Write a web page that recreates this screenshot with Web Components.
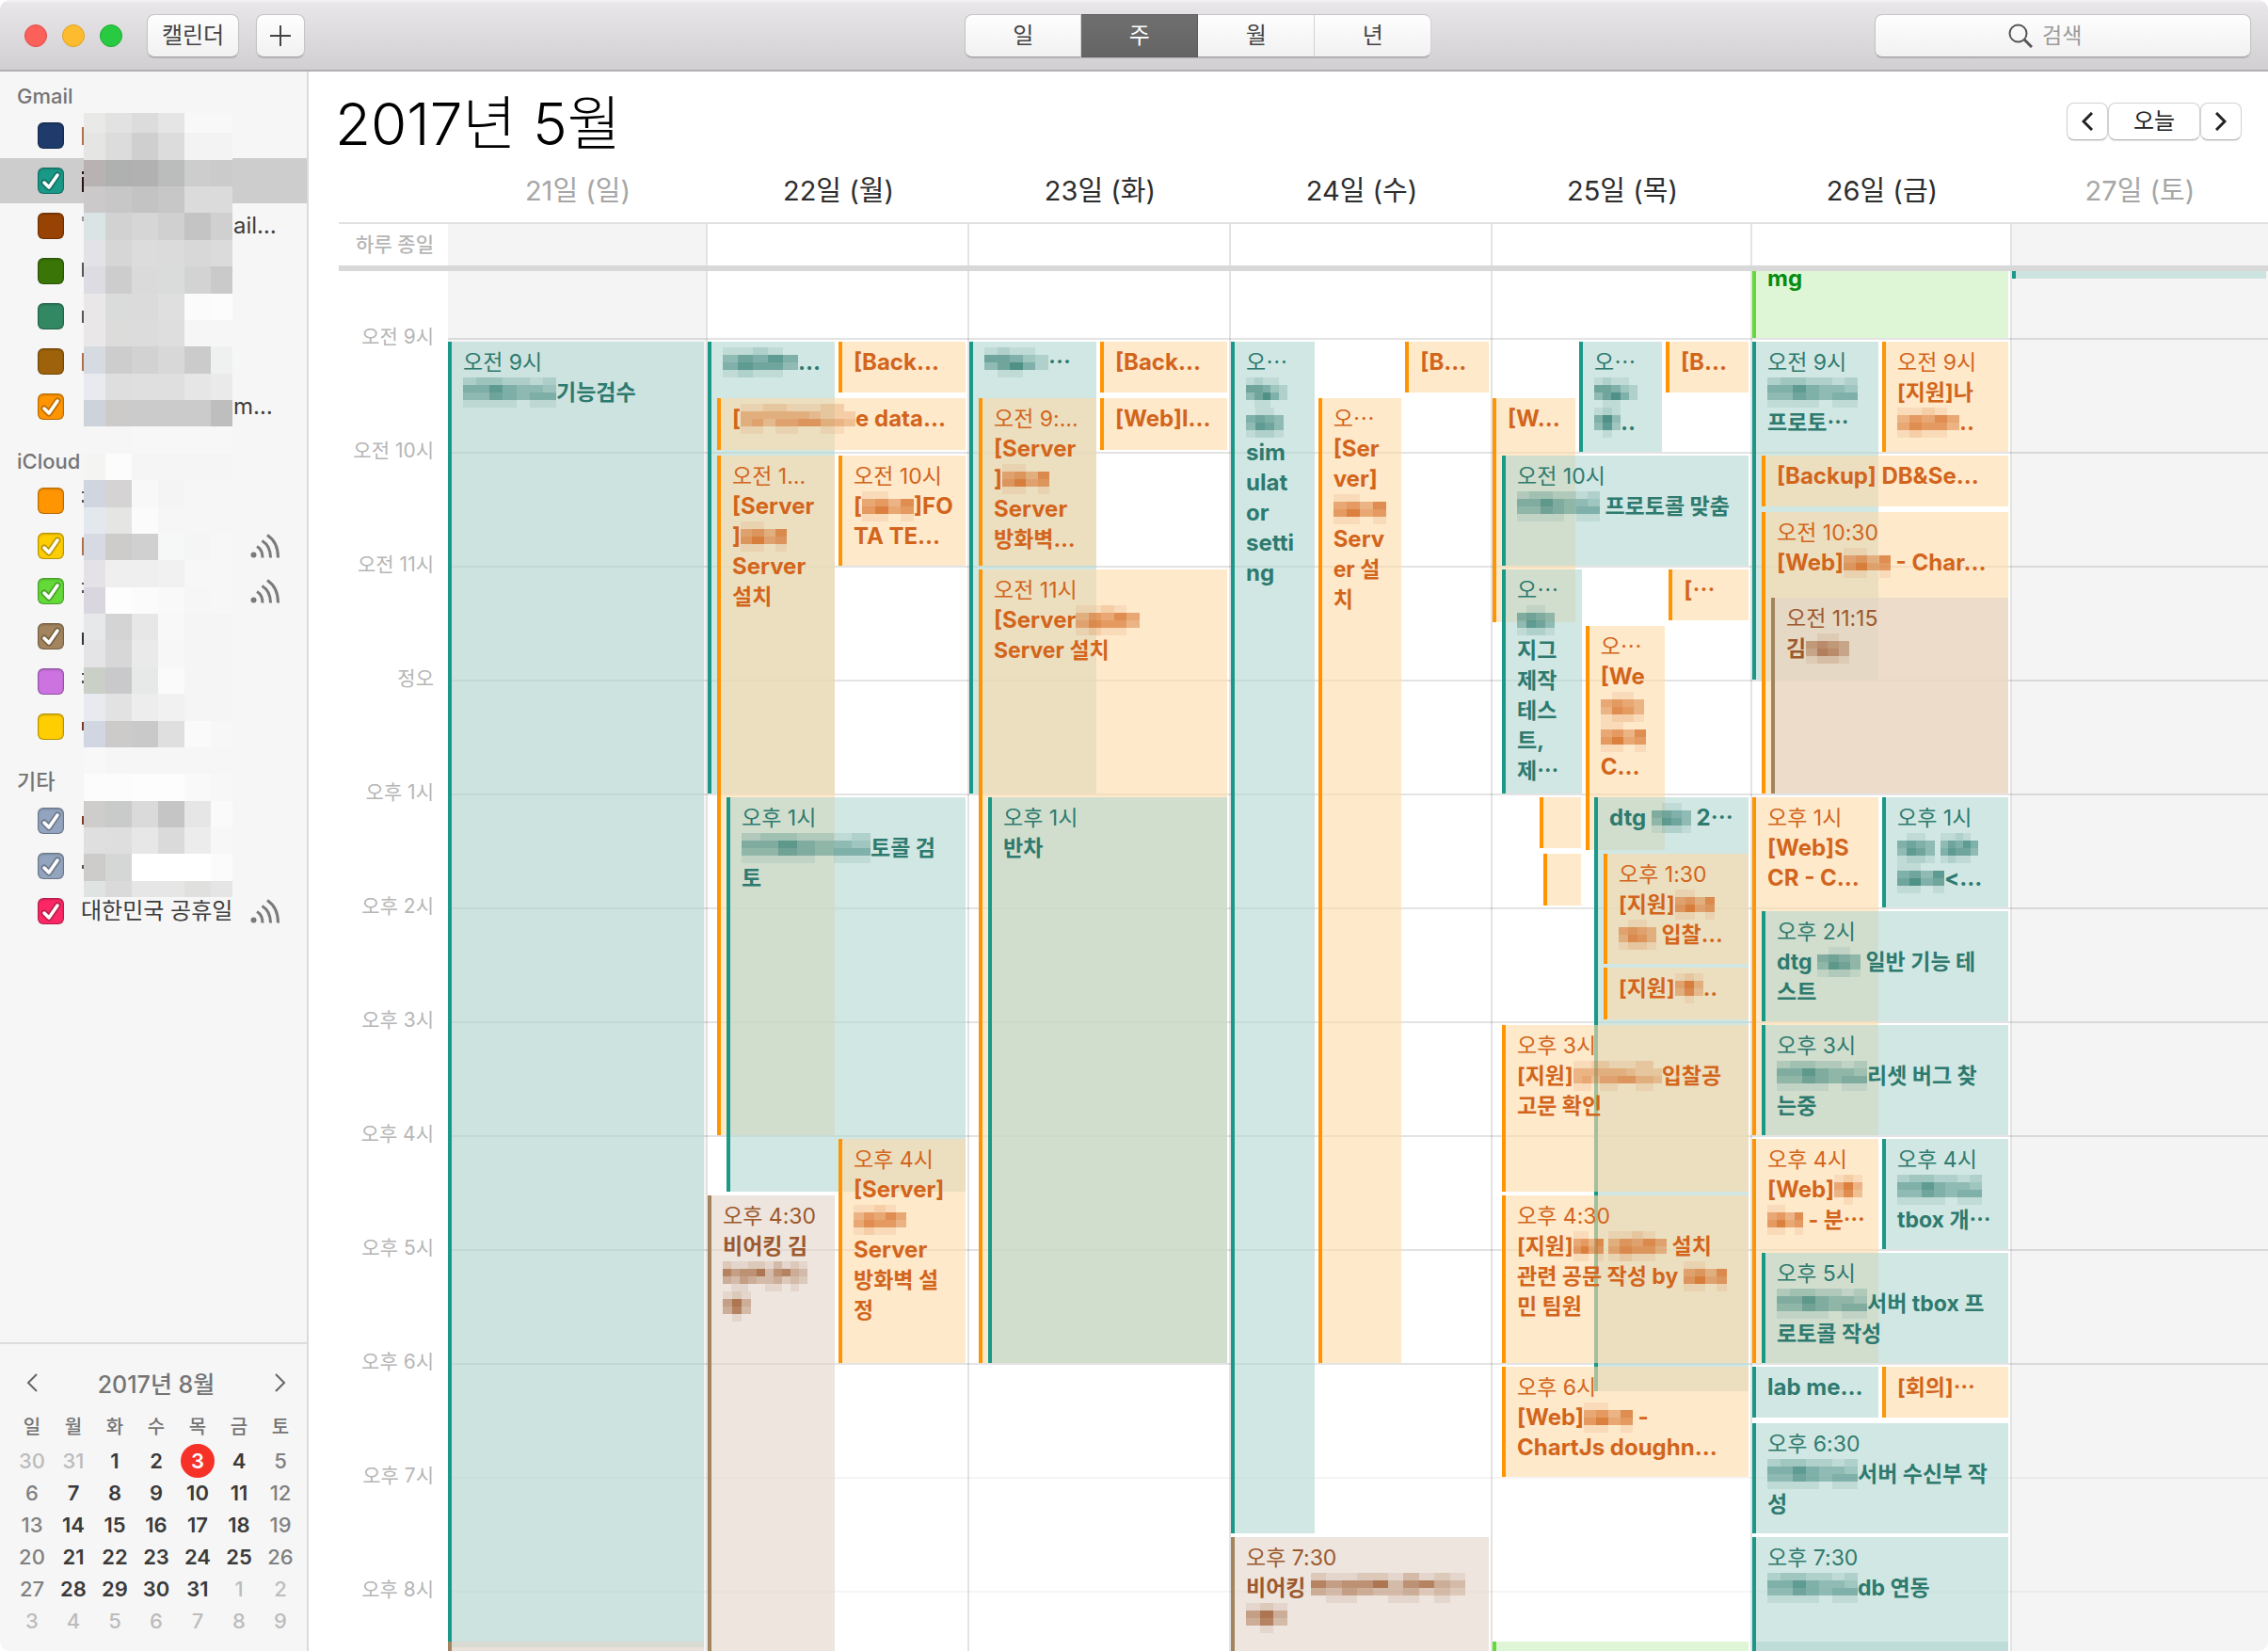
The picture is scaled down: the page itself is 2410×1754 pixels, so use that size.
<!DOCTYPE html>
<html lang="ko">
<head>
<meta charset="utf-8">
<title>캘린더</title>
<style>
html,body{margin:0;height:100%;background:#fff}
body{font-family:Inter,"Noto Sans CJK KR",sans-serif;color:#333}
</style>
</head>
<body>
<cal-app>
  <mac-toolbar slot="toolbar"></mac-toolbar>
  <cal-sidebar slot="side">
    <cal-group name="Gmail">
      <cal-item color="#1f3b6b"></cal-item>
      <cal-item color="#1a9988" checked selected></cal-item>
      <cal-item color="#984303">ail…</cal-item>
      <cal-item color="#3a7508"></cal-item>
      <cal-item color="#318862"></cal-item>
      <cal-item color="#9e630a"></cal-item>
      <cal-item color="#ff9502" checked>m…</cal-item>
    </cal-group>
    <cal-group name="iCloud">
      <cal-item color="#ff9502"></cal-item>
      <cal-item color="#fecd02" checked feed></cal-item>
      <cal-item color="#63da38" checked feed></cal-item>
      <cal-item color="#a2845e" checked></cal-item>
      <cal-item color="#cc73e1"></cal-item>
      <cal-item color="#fecd02"></cal-item>
    </cal-group>
    <cal-group name="기타">
      <cal-item color="#93a4be" checked></cal-item>
      <cal-item color="#93a4be" checked></cal-item>
      <cal-item color="#fc2866" checked feed wide>대한민국 공휴일</cal-item>
    </cal-group>
    <mini-calendar slot="foot"></mini-calendar>
  </cal-sidebar>
  <week-view></week-view>
</cal-app>
<script>
const def = (name, html, setup) => customElements.define(name, class extends HTMLElement {
  connectedCallback() {
    if (this.shadowRoot) return;
    const root = this.attachShadow({mode: 'open'});
    root.innerHTML = typeof html === 'function' ? html(this) : html;
    if (setup) setup(this, root);
  }
});
const chevron = (dir, s) => `<svg width="12" height="20" viewBox="0 0 12 20" fill="none" stroke="currentColor" stroke-width="${s}"><path d="${dir === 'left' ? 'M11 1 2 10l9 9' : 'M1 1l9 9-9 9'}"/></svg>`;

/* Window frame: toolbar on top, sidebar and week below */
def('cal-app', `
<style>
:host{display:flex;flex-direction:column;height:100vh;border-radius:10px;overflow:hidden;background:#fff}
.body{flex:1;min-height:0;display:flex}
</style>
<slot name="toolbar"></slot><div class="body"><slot name="side"></slot><slot></slot></div>`);

def('mac-toolbar', `
<style>
:host{display:flex;align-items:center;height:72px;border-bottom:2px solid #b1afb1;background:linear-gradient(#f4f3f4 0,#e8e6e8 4px,#d1cfd2);padding:2px 18px 0 26px}
.light{width:22px;height:22px;border-radius:50%;border:1px solid;margin-right:16px}
button,.search{box-sizing:border-box;height:46px;margin:0;border:1px solid #c6c4c6;border-bottom-color:#a2a0a2;border-radius:8px;background:linear-gradient(#fefefe,#f1f1f1);color:#444;font:24px/40px Inter,"Noto Sans CJK KR",sans-serif;padding:0;display:flex;align-items:center;justify-content:center;box-shadow:0 1px 1px rgba(0,0,0,.12)}
.name{width:98px;margin-left:10px}.add{width:52px;margin-left:18px}
.seg{display:flex}
.seg button{width:124px;border-radius:0;border-left-width:0;border-right-color:#d5d5d5}
.seg button:first-child{border-radius:8px 0 0 8px;border-left-width:1px}
.seg button:last-child{border-radius:0 8px 8px 0}
.seg button[aria-pressed=true]{background:linear-gradient(#6f6f6f,#646464);color:#fff;border-color:#5e5e5e}
.a{flex:70}.b{flex:47}
.search{width:400px;gap:10px;color:#555}
input{width:80px;box-sizing:border-box;border:0;padding:0;background:none;font:23px/40px Inter,"Noto Sans CJK KR",sans-serif;outline:0;appearance:none}
input::placeholder{color:#9b9b9b;opacity:1}
input::-webkit-search-cancel-button{display:none}
</style>
<span class="light" style="background:#fc605b;border-color:#de4843"></span>
<span class="light" style="background:#fdbc2f;border-color:#dfa023"></span>
<span class="light" style="background:#28ca42;border-color:#1bab2c"></span>
<button class="name">캘린더</button>
<button class="add" aria-label="+"><svg width="24" height="24" stroke="currentColor" stroke-width="2"><path d="M1 12h22M12 1v22"/></svg></button>
<span class="a"></span>
<div class="seg"><button>일</button><button aria-pressed="true">주</button><button>월</button><button>년</button></div>
<span class="b"></span>
<label class="search"><svg width="26" height="26" fill="none" stroke="currentColor" stroke-width="2"><circle cx="10.500" cy="10.500" r="9"/><path d="M17 17l8 8" stroke-width="3"/></svg><input type="search" placeholder="검색" aria-label="검색"></label>`);

/* Blurred-out calendar names: one grid of cells down the list */
const nameCells = `
e9e9e7 e2 dc e5 f8 f8|e5e5e3 dc cf dc f3 f3|b9b2b2 afb1b0 b1 babdbb cd cb|cbc9ca c7 c3 c7 db db|dbe4e5 d2 d6 d0 c4 d0|
e3e2e6 d6 dc db d8 db|dddce2 cd da d9dcdb d3 ca|eae7e9 dadcdb db df fb fc|eae7e8 dcdcda dc de f6 f6|d6dbe1 cd d2 d8 cb eff1f0|
e8eaef de df df e6 ea|cdd2db cdcbc9 cb cb cb be|f6 f6 f7 f7 f7 f7|f4f5f2 fc f5 f5 f5 f5|d1d5df d5d3d4 f8 f4 f6 f6|
e3e8ee e5e5e4 fb f6 f6 f6|d7dae3 cdcccb d0 f6f8f7 f5 f7|e5e2e7 ef ef f1 f7 f7|dad6df fd fb f9 f6 f7|e7e8ea d4 e7 f8 f5 f5|
e4e4e6 d7 ea f7 f5 f5|cacfc7 c9c9cb e6e9e7 fa f5 f5|e9eaf0 e2 ed f1 f5 f5|d2d5e2 cdcbca c9 df fa f7|f8 f6 f6 f6 f6 f6|
fc fc fd fd f9 f7|cecdcb c9cbca da c5 e6 fa|df de e7 da ec f7|cdccca d5d7d6 ff ff ff fb|dfe4e3 da e6 e6 e0e1df e5`.replace(/\n/g, '').split('|').map(r => r.trim().split(' '));
const colX = [2, 25, 53, 81, 109, 137, 160];
const rowY = i => i ? Math.round(i * 28.37 - 7) : 0;
const nameSvg = () => {
  let s = '';
  nameCells.forEach((r, i) => r.forEach((c, j) => {
    const y = rowY(i), h = (i === 29 ? 833 : rowY(i + 1)) - y;
    s += `<rect x="${colX[j]}" y="${y}" width="${colX[j + 1] - colX[j]}" height="${h}" fill="#${c.length === 2 ? c + c + c : c}"/>`;
  }));
  [[15,19,'#b0704f'],[62,3,'#2a1010'],[68,16,'#2a1010'],[110,5,'#999'],[159,15,'#555'],[210,13,'#555'],[255,19,'#b0704f'],[402,2,'#555'],[411,3,'#555'],[451,19,'#b0704f'],[499,2,'#555'],[507,3,'#555'],[552,13,'#333'],[595,2,'#555'],[603,3,'#555'],[647,9,'#7a3b28'],[747,9,'#7a3b28'],[799,4,'#555']].forEach(([y, h, c]) => s += `<rect x="0" y="${y}" width="2" height="${h}" fill="${c}"/>`);
  return `<svg width="160" height="833" shape-rendering="crispEdges">${s}</svg>`;
};

def('cal-sidebar', () => `
<style>
:host{box-sizing:border-box;width:328px;flex:none;display:flex;flex-direction:column;background:#f6f6f6;border-right:2px solid #dadada}
.list{position:relative;flex:1;min-height:0;overflow:hidden}
.mask{position:absolute;left:87px;top:44px;line-height:0;pointer-events:none}
::slotted(cal-group:first-of-type){margin-top:-8px}
</style>
<div class="list"><slot></slot><div class="mask">${nameSvg()}</div></div>
<slot name="foot"></slot>`);

def('cal-group', el => `
<style>
:host{display:block}
h2{margin:0;padding:16px 18px 0;font-size:22px;line-height:36px;font-weight:500;color:#747474}
</style>
<h2>${el.getAttribute('name')}</h2><slot></slot>`);

def('cal-item', el => `
<style>
:host{display:block}
label{display:flex;align-items:center;height:48px;padding:0 28px 0 40px;font-size:24px;line-height:36px;color:#3d3d3d}
:host([selected]) label{background:#cdcdcd}
.box{display:grid;width:28px;height:28px;margin-right:18px}
.box>*{grid-area:1/1}
input{appearance:none;margin:0;width:28px;height:28px;border-radius:6px;background:${el.getAttribute('color')};border:1px solid rgba(0,0,0,.28);box-shadow:inset 0 1px 2px rgba(0,0,0,.2)}
.text{flex:1;white-space:nowrap;padding-left:162px}
:host([wide]) .text{padding-left:0}
svg{display:block}
</style>
<label><span class="box"><input type="checkbox" aria-label="캘린더" ${el.hasAttribute('checked') ? 'checked' : ''}>
${el.hasAttribute('checked') ? '<svg width="28" height="28" fill="none" stroke-linecap="round" stroke-linejoin="round"><path d="M7 16l5 5 9-13" stroke="#000" stroke-opacity=".25" stroke-width="7"/><path d="M7 16l5 5 9-13" stroke="#fff" stroke-width="3.500"/></svg>' : ''}</span>
<span class="text"><slot></slot></span>
${el.hasAttribute('feed') ? '<svg width="32" height="26" fill="none" stroke="#7a7a7a" stroke-width="3"><circle cx="3.500" cy="22.500" r="3" fill="#7a7a7a" stroke="none"/><path d="M7 13.500Q13 17 13 25.500M12.500 7.500Q21.500 13 21.500 25.500M18 1.500Q29.500 9 29.500 25.500"/></svg>' : ''}</label>`);

def('mini-calendar', () => {
  const days = [30, 31, ...Array.from({length: 31}, (_, i) => i + 1), 1, 2, 3, 4, 5, 6, 7, 8, 9];
  let rows = '';
  for (let r = 0; r < 6; r++) {
    rows += '<tr>';
    for (let c = 0; c < 7; c++) {
      const i = r * 7 + c, out = i < 2 || i > 32;
      rows += `<td class="${out ? 'out' : c % 6 ? '' : 'end'}">${i === 4 ? '<b>3</b>' : days[i]}</td>`;
    }
    rows += '</tr>';
  }
  return `
<style>
:host{display:block;border-top:2px solid #dcdcdc;padding:22px 6px 15px 12px}
header{display:flex;align-items:center;justify-content:space-between;padding:0 16px;height:38px;color:#747474;font-size:25px;font-weight:500}
button{border:0;background:none;padding:0;color:#666;display:flex}
table{border-collapse:collapse;table-layout:fixed;width:308px;margin-top:9px}
th,td{padding:0;text-align:center;height:34px;line-height:34px;font-size:22px;font-weight:600;color:#3a3a3a}
th{font-size:20px;height:38px;line-height:38px;color:#747474;font-weight:500}
td.end,td.out{font-weight:500}
td.end{color:#808080}td.out{color:#bcbcbc}
b{display:block;width:36px;height:36px;margin:-1px auto;line-height:36px;border-radius:50%;background:#f63127;color:#fff;font-weight:600}
</style>
<header><button aria-label="이전 달">${chevron('left', 2)}</button><span>2017년 8월</span><button aria-label="다음 달">${chevron('right', 2)}</button></header>
<table><thead><tr>${[...'일월화수목금토'].map(d => `<th>${d}</th>`).join('')}</tr></thead><tbody>${rows}</tbody></table>`;
});

/* Pixelated part of a title; each digit is the strength of one cell */
def('px-mask', el => {
  const rows = el.getAttribute('rows').split('/'), w = rows[0].length, h = rows.length;
  let s = '';
  rows.forEach((r, y) => [...r].forEach((d, x) => { if (+d) s += `<rect x="${x}" y="${y}" width="1" height="1" fill-opacity="${d / 10}"/>`; }));
  return `<style>:host{display:inline-block;vertical-align:top;width:${el.getAttribute('w')}px;height:32px}svg{display:block;width:100%;height:100%}</style>
<svg viewBox="0 0 ${w} ${h}" preserveAspectRatio="none" fill="currentColor" shape-rendering="crispEdges">${s}</svg>`;
});

/* One event: placed on five-minute grid rows, in a lane of its day */
const tones = {
  t: ['#1a9988', 'rgba(178,215,208,.6)', '#2e7a6f'],
  o: ['#ff9502', 'rgba(254,218,168,.6)', '#d2651b'],
  b: ['#a2845e', 'rgba(225,212,200,.6)', '#9c592d'],
  g: ['#63da38', 'rgba(202,240,187,.6)', '#068c10']
};
def('cal-event', el => {
  const a = n => +el.getAttribute(n) || 0;
  const [bar, bg, fg] = tones[el.getAttribute('tone')];
  const n = a('lanes') || 1, i = a('lane'), base = a('base'), inner = a('inner');
  const lane = `(100% + 2px - ${base}px) / ${n}`;
  return `
<style>
:host{box-sizing:border-box;grid-column:1;justify-self:start;margin:4px 0 ${a('to') - a('from') <= 30 ? 2 : 0}px calc(${base + inner}px + ${lane} * ${i});
width:${a('w') ? a('w') + 'px' : `calc(${lane} - ${4 + inner}px)`};
grid-row:${(a('from') - 480) / 5 + 1} / ${(a('to') - 480) / 5 + 1};
border-left:4px solid ${bar};background:${bg};background-clip:padding-box;color:${fg};padding:6px 0 0 12px;font-size:23px;line-height:32px;white-space:nowrap;min-width:0;min-height:0}
</style><slot></slot>`;
});

const P = {
  a: '1211010/6642032/5583155/0110010', b: '12110/66532/46852/01100', c: '0110/5654/4764/1221',
  d: '1100/5647/6856/1101', e: '11210/46575/57664/12110', f: '1122111220/4444443222/4535566443/1101100110',
  g: '2112213121/7566836743/4354334232/0110011010', h: '121/584/473/010', k: '2332212/5575443/4465455/1111011'
};
const m = (w, p) => `<px-mask w="${w}" rows="${P[p]}"></px-mask>`;
const H = (h, mm = 0) => h * 60 + mm;
/* tone, from, to, lane options, time line (empty for title only), title lines */
const week = [
  [['t', H(9), H(20,30), {}, '오전 9시', [m(99,'k') + '기능검수']],
   ['b', H(20,25), H(21), {}, '오후 8:30', []]],
  [['t', H(9), H(13), {n:2}, '', [m(80,'e') + '…']],
   ['o', H(9), H(9,30), {n:2,i:1}, '', ['[Back…']],
   ['o', H(9,30), H(10), {j:10}, '', ['[' + m(122,'f') + 'e data…']],
   ['o', H(10), H(16), {n:2,j:10}, '오전 1…', ['[Server', ']' + m(49,'d'), 'Server', '설치']],
   ['o', H(10), H(11), {n:2,i:1}, '오전 10시', ['[' + m(55,'d') + ']FO', 'TA TE…']],
   ['t', H(13), H(16,30), {j:20}, '오후 1시', [m(137,'k') + '토콜 검', '토']],
   ['o', H(16), H(18), {n:2,i:1}, '오후 4시', ['[Server]', m(56,'e'), 'Server', '방화벽 설', '정']],
   ['b', H(16,30), H(21), {n:2}, '오후 4:30', ['비어킹 김', m(90,'g'), m(30,'h')]]],
  [['t', H(9), H(13), {n:2}, '', [m(68,'b') + '⋯']],
   ['o', H(9), H(9,30), {n:2,i:1}, '', ['[Back…']],
   ['o', H(9,30), H(10), {n:2,i:1}, '', ['[Web]l…']],
   ['o', H(9,30), H(11), {n:2,j:10}, '오전 9:…', ['[Server', ']' + m(50,'d'), 'Server', '방화벽…']],
   ['o', H(11), H(18), {j:10}, '오전 11시', ['[Server' + m(68,'e'), 'Server 설치']],
   ['t', H(13), H(18), {j:20}, '오후 1시', ['반차']]],
  [['t', H(9), H(19,30), {n:3}, '오⋯', [m(44,'b'), m(40,'c'), 'sim', 'ulat', 'or', 'setti', 'ng']],
   ['o', H(9), H(9,30), {n:3,i:2}, '', ['[B…']],
   ['o', H(9,30), H(18), {n:3,i:1}, '오⋯', ['[Ser', 'ver]', m(56,'d'), 'Serv', 'er 설', '치']],
   ['b', H(19,30), H(21), {}, '오후 7:30', ['비어킹 ' + m(164,'g'), m(44,'h')]]],
  [['t', H(9), H(10), {n:3,i:1}, '오⋯', [m(46,'b'), m(28,'h') + '‥']],
   ['o', H(9), H(9,30), {n:3,i:2}, '', ['[B…']],
   ['o', H(9,30), H(11,30), {n:3}, '', ['[W…']],
   ['t', H(10), H(11), {b:10}, '오전 10시', [m(88,'k') + ' 프로토콜 맞춤']],
   ['t', H(11), H(13), {b:10,n:3}, '오⋯', [m(40,'c'), '지그', '제작', '테스', '트,', '제⋯']],
   ['o', H(11), H(11,30), {b:10,n:3,i:2}, '', ['[⋯']],
   ['o', H(11,30), H(13,30), {b:10,n:3,i:1}, '오⋯', ['[We', m(46,'c'), m(48,'d'), 'C…']],
   ['o', H(13), H(13,30), {b:50,w:44}, '', []],
   ['o', H(13,30), H(14), {b:54,w:40}, '', []],
   ['t', H(13), H(18,15), {b:108}, '', ['dtg ' + m(42,'c') + ' 2⋯']],
   ['o', H(13,30), H(14,30), {b:118}, '오후 1:30', ['[지원]' + m(42,'d'), m(40,'c') + ' 입찰…']],
   ['o', H(14,30), H(15), {b:118}, '', ['[지원]' + m(30,'h') + '‥']],
   ['o', H(15), H(16,30), {b:10}, '오후 3시', ['[지원]' + m(94,'f') + '입찰공', '고문 확인']],
   ['o', H(16,30), H(18), {b:10}, '오후 4:30', ['[지원]' + m(32,'d') + ' ' + m(62,'e') + ' 설치', '관련 공문 작성 by ' + m(46,'d'), '민 팀원']],
   ['o', H(18), H(19), {b:10}, '오후 6시', ['[Web]' + m(52,'d') + ' -', 'ChartJs doughn…']],
   ['g', H(20,25), H(21), {}, '오후 8:30', []]],
  [['g', H(8), H(9), {}, '&nbsp;', ['mg']],
   ['t', H(9), H(12), {n:2}, '오전 9시', [m(96,'k'), '프로토⋯']],
   ['o', H(9), H(10), {n:2,i:1}, '오전 9시', ['[지원]나', m(66,'e') + '‥']],
   ['o', H(10), H(10,30), {j:10}, '', ['[Backup] DB&amp;Se…']],
   ['o', H(10,30), H(13), {j:10}, '오전 10:30', ['[Web]' + m(50,'d') + ' - Char…']],
   ['b', H(11,15), H(13), {j:20}, '오전 11:15', ['김' + m(46,'c')]],
   ['o', H(13), H(16), {n:2}, '오후 1시', ['[Web]S', 'CR - C…']],
   ['t', H(13), H(14), {n:2,i:1}, '오후 1시', [m(40,'c') + ' ' + m(40,'e'), m(50,'d') + '&lt;…']],
   ['t', H(14), H(15), {j:10}, '오후 2시', ['dtg ' + m(46,'c') + ' 일반 기능 테', '스트']],
   ['t', H(15), H(16), {j:10}, '오후 3시', [m(96,'k') + '리셋 버그 찾', '는중']],
   ['o', H(16), H(18), {n:2}, '오후 4시', ['[Web]' + m(30,'h'), m(38,'d') + ' - 분⋯']],
   ['t', H(16), H(17), {n:2,i:1}, '오후 4시', [m(90,'k'), 'tbox 개⋯']],
   ['t', H(17), H(18), {j:10}, '오후 5시', [m(96,'k') + '서버 tbox 프', '로토콜 작성']],
   ['t', H(18), H(18,30), {n:2}, '', ['lab me…']],
   ['o', H(18), H(18,30), {n:2,i:1}, '', ['[회의]⋯']],
   ['t', H(18,30), H(19,30), {}, '오후 6:30', [m(96,'k') + '서버 수신부 작', '성']],
   ['t', H(19,30), H(21), {}, '오후 7:30', [m(96,'k') + 'db 연동']],
   ['t', H(20,25), H(21), {}, '오후 8:30', []]],
  [['t', H(8), H(8,30), {}, '', []]]
];

def('cal-day', el => {
  const day = +el.getAttribute('index');
  let s = '';
  for (let h = 0; h < 13; h++) s += `<i style="grid-row:${h * 12 + 1}" class="${h > 10 ? 'late' : ''}"></i>`;
  for (const [tone, from, to, o, time, title] of week[day])
    s += `<cal-event tone="${tone}" from="${from}" to="${to}" lanes="${o.n || 1}" lane="${o.i || 0}" base="${o.b || 0}" inner="${o.j || 0}" w="${o.w || 0}">${time ? `<div>${time}</div>` : ''}${title.map(t => `<div class="title${/[가-힣]/.test(t) ? '' : ' latin'}">${t}</div>`).join('')}</cal-event>`;
  return `
<style>
:host{display:grid;grid-template-columns:minmax(0,1fr);grid-template-rows:${Array(13).fill('repeat(11,10px) 11px').join(' ')};border-right:2px solid #e3e3e3;min-width:0}
:host([weekend]){background:#f4f4f4}
:host(:last-of-type){border-right:0}
i{grid-column:1;height:2px;margin-right:-2px;background:rgba(0,0,0,.11)}
i.late{background:rgba(0,0,0,.04)}
cal-event div{height:32px}
.title{font-weight:700}
.latin{font-size:24px}
</style>${s}`;
});

def('week-view', () => {
  const heads = ['21일 (일)', '22일 (월)', '23일 (화)', '24일 (수)', '25일 (목)', '26일 (금)', '27일 (토)'];
  const hours = ['', '오전 9시', '오전 10시', '오전 11시', '정오', '오후 1시', '오후 2시', '오후 3시', '오후 4시', '오후 5시', '오후 6시', '오후 7시', '오후 8시'];
  return `
<style>
:host{flex:1;min-width:0;display:flex;flex-direction:column;padding-left:32px;background:#fff}
.top{display:flex;align-items:center;justify-content:space-between;height:78px;padding:14px 28px 0 0}
h1{margin:0 0 0 -4px;padding-top:6px;font-size:62px;line-height:72px;font-weight:300;color:#000}
nav{display:flex}
button{box-sizing:border-box;height:40px;width:44px;padding:0;border:1px solid #d2d2d2;border-bottom-color:#b4b4b4;border-radius:8px;background:#fff;box-shadow:0 1px 1px rgba(0,0,0,.1);color:#222;font:24px/36px Inter,"Noto Sans CJK KR",sans-serif;display:flex;align-items:center;justify-content:center}
button.today{width:98px}
.row{display:grid;grid-template-columns:116px minmax(0,276fr) repeat(3,minmax(0,278fr)) repeat(2,minmax(0,276fr)) minmax(0,272fr)}
.heads{height:68px;line-height:70px;font-size:29px;color:#2d2d2d;text-align:center}
.heads .off{color:#a6a6a6}
.allday{border-top:2px solid #e1e1e1;border-bottom:6px solid #d8d8d8;height:44px}
.allday span{border-right:2px solid #e3e3e3}
.allday span:last-child{border:0}
.allday .off{background:#f4f4f4}
.label{text-align:right;padding-right:15px;font-size:21px;line-height:30px;color:#b6b6b6}
.allday .label{line-height:44px;font-weight:500}
.scroll{flex:1;min-height:0;overflow:hidden}
.scroll .row{margin-top:-50px}
.hour{height:121px}
.hour div{position:relative;top:-16px}
</style>
<div class="top"><h1>2017년 5월</h1><nav><button aria-label="이전 주">${chevron('left', 3)}</button><button class="today">오늘</button><button aria-label="다음 주">${chevron('right', 3)}</button></nav></div>
<div class="row heads"><span></span>${heads.map((h, i) => `<span class="${i % 6 ? '' : 'off'}">${h}</span>`).join('')}</div>
<div class="row allday"><div class="label">하루 종일</div>${heads.map((h, i) => `<span class="${i % 6 ? '' : 'off'}"></span>`).join('')}</div>
<div class="scroll"><div class="row"><div>${hours.map(h => `<div class="hour label"><div>${h}</div></div>`).join('')}</div>
${heads.map((h, i) => `<cal-day index="${i}" ${i % 6 ? '' : 'weekend'}></cal-day>`).join('')}</div></div>`;
});
</script>
</body>
</html>
